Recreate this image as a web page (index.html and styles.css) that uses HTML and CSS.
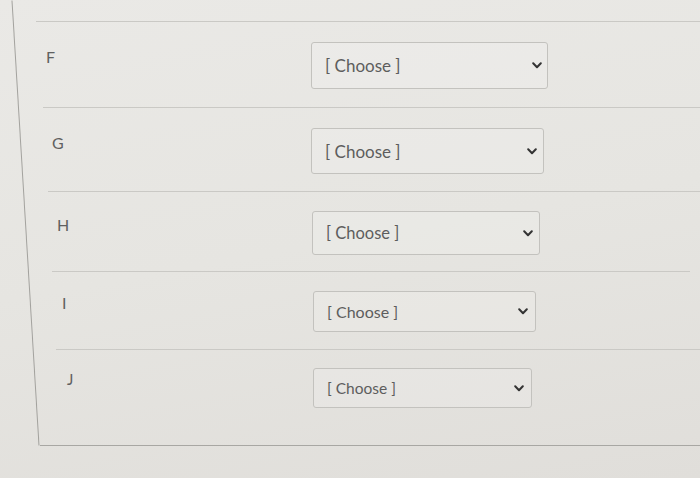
FILE: index.html
```html
<!DOCTYPE html>
<html lang="en">
<head>
<meta charset="utf-8">
<title>Matching</title>
<link rel="stylesheet" href="styles.css">
</head>
<body>
<div class="card">
  <div class="row row-f">
    <div class="label">F</div>
    <div class="select"><span>[ Choose ]</span><svg class="chev" viewBox="0 0 10 7" width="10" height="7"><path d="M1.2 1.3 L5 5.2 L8.8 1.3" fill="none" stroke="#333" stroke-width="2" stroke-linecap="round" stroke-linejoin="round"/></svg></div>
  </div>
  <div class="row row-g">
    <div class="label">G</div>
    <div class="select"><span>[ Choose ]</span><svg class="chev" viewBox="0 0 10 7" width="10" height="7"><path d="M1.2 1.3 L5 5.2 L8.8 1.3" fill="none" stroke="#333" stroke-width="2" stroke-linecap="round" stroke-linejoin="round"/></svg></div>
  </div>
  <div class="row row-h">
    <div class="label">H</div>
    <div class="select"><span>[ Choose ]</span><svg class="chev" viewBox="0 0 10 7" width="10" height="7"><path d="M1.2 1.3 L5 5.2 L8.8 1.3" fill="none" stroke="#333" stroke-width="2" stroke-linecap="round" stroke-linejoin="round"/></svg></div>
  </div>
  <div class="row row-i">
    <div class="label">I</div>
    <div class="select"><span>[ Choose ]</span><svg class="chev" viewBox="0 0 10 7" width="10" height="7"><path d="M1.2 1.3 L5 5.2 L8.8 1.3" fill="none" stroke="#333" stroke-width="2" stroke-linecap="round" stroke-linejoin="round"/></svg></div>
  </div>
  <div class="row row-j">
    <div class="label">J</div>
    <div class="select"><span>[ Choose ]</span><svg class="chev" viewBox="0 0 10 7" width="10" height="7"><path d="M1.2 1.3 L5 5.2 L8.8 1.3" fill="none" stroke="#333" stroke-width="2" stroke-linecap="round" stroke-linejoin="round"/></svg></div>
  </div>
  <div class="card-bottom"></div>
</div>
</body>
</html>
```

FILE: styles.css
```css
* { box-sizing: border-box; }

html, body {
  margin: 0;
  height: 478px;
  overflow: hidden;
}

body {
  background: linear-gradient(170deg, #eae9e6 0%, #e6e5e1 50%, #e0deda 100%);
  font-family: Lato, "Open Sans", sans-serif;
  color: #555;
}

.card {
  position: relative;
  padding-top: 21px;
}

.card::before {
  content: "";
  position: absolute;
  left: 25px;
  top: 0;
  width: 1px;
  height: 446px;
  background: #a3a29e;
  transform: rotate(-3.47deg);
}

.row {
  display: flex;
  align-items: flex-start;
  border-top: 1px solid #cac9c5;
}

.label {
  font-size: 16px;
  line-height: 20px;
  color: #606060;
}

.select {
  display: flex;
  align-items: center;
  justify-content: space-between;
  border: 1px solid #c3c2be;
  border-radius: 3px;
  background: rgba(255, 255, 255, 0.15);
  padding: 0 5px 0 13px;
  color: #5d5d5d;
  font-size: 17px;
}

.chev { flex: none; }

.row-f { margin-left: 36px; height: 86px; padding-top: 20px; }
.row-f .label { width: 275px; padding-left: 10px; margin-top: 5px; }
.row-f .select { width: 237px; height: 47px; }

.row-g { margin-left: 43px; height: 84px; padding-top: 20px; }
.row-g .label { width: 268px; padding-left: 9px; margin-top: 5px; }
.row-g .select { width: 233px; height: 46px; padding-right: 6px; }

.row-h { margin-left: 48px; height: 80px; padding-top: 19px; }
.row-h .label { width: 264px; padding-left: 9px; margin-top: 4px; }
.row-h .select { width: 228px; height: 44px; font-size: 16.5px; padding-right: 6px; }

.row-i { margin-left: 52px; height: 78px; padding-top: 19px; margin-right: 10px; }
.row-i .label { width: 261px; padding-left: 10px; margin-top: 2px; }
.row-i .select { width: 223px; height: 41px; font-size: 16px; padding-right: 7px; }

.row-j { margin-left: 56px; height: 96px; padding-top: 18px; }
.row-j .label { width: 257px; padding-left: 11px; margin-top: 1px; font-size: 15px; }
.row-j .select { width: 219px; height: 40px; font-size: 15.5px; padding-right: 7px; }

.card-bottom {
  margin-left: 40px;
  height: 1px;
  background: #a8a7a3;
}
```
